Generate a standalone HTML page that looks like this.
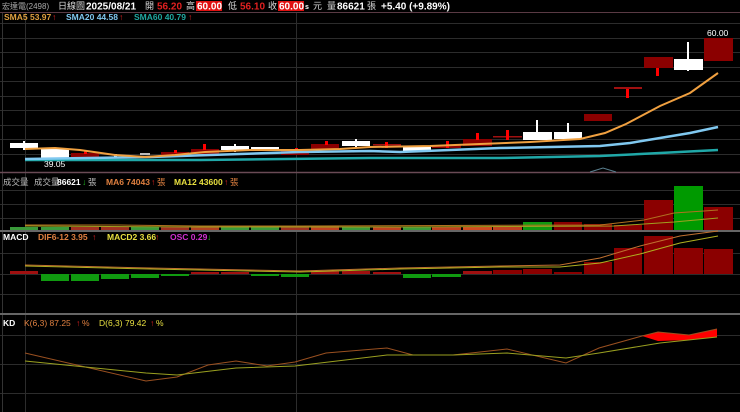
<!DOCTYPE html>
<html><head><meta charset="utf-8"><style>
html,body{margin:0;padding:0;background:#000;width:740px;height:412px;overflow:hidden}
svg{display:block}
text{font-family:"Liberation Sans","Noto Sans CJK TC",sans-serif}
</style></head><body>
<svg width="740" height="412" viewBox="0 0 740 412" xmlns="http://www.w3.org/2000/svg">
<rect width="740" height="412" fill="#000"/>
<!-- header -->
<g font-size="9">
<text x="2" y="9" fill="#aaa" font-size="8" font-family="'Liberation Serif','Noto Serif CJK SC',serif">宏達電(2498)</text>
<text x="58" y="9" fill="#ddd">日線圖</text>
<text x="86" y="9.5" fill="#fff" font-weight="bold" font-size="10">2025/08/21</text>
<text x="145" y="9" fill="#ddd">開</text>
<text x="157" y="9.5" fill="#e02020" font-weight="bold" font-size="10">56.20</text>
<text x="186" y="9" fill="#ddd">高</text>
<rect x="196" y="1" width="26" height="10" fill="#e01010"/>
<text x="197" y="9.5" fill="#fff" font-weight="bold" font-size="10">60.00</text>
<text x="228" y="9" fill="#ddd">低</text>
<text x="240" y="9.5" fill="#e02020" font-weight="bold" font-size="10">56.10</text>
<text x="268" y="9" fill="#ddd">收</text>
<rect x="278" y="1" width="26" height="10" fill="#e01010"/>
<text x="279" y="9.5" fill="#fff" font-weight="bold" font-size="10">60.00</text>
<text x="305" y="9" fill="#fff" font-size="7" font-weight="bold">s</text>
<text x="313" y="9" fill="#ddd">元</text>
<text x="327" y="9" fill="#ddd">量</text>
<text x="337" y="9.5" fill="#fff" font-weight="bold" font-size="10">86621</text>
<text x="367" y="9" fill="#ddd">張</text>
<text x="381" y="9.5" fill="#fff" font-weight="bold" font-size="10">+5.40 (+9.89%)</text>
</g>
<line x1="0" y1="12.5" x2="740" y2="12.5" stroke="#5a3a44" stroke-width="1"/>
<!-- grid lines -->
<g stroke="#2c2c2c" stroke-width="1">
<line x1="0" y1="23.5" x2="740" y2="23.5"/><line x1="0" y1="38.5" x2="740" y2="38.5"/><line x1="0" y1="52.5" x2="740" y2="52.5"/><line x1="0" y1="67.5" x2="740" y2="67.5"/><line x1="0" y1="81.5" x2="740" y2="81.5"/><line x1="0" y1="96.5" x2="740" y2="96.5"/><line x1="0" y1="110.5" x2="740" y2="110.5"/><line x1="0" y1="125.5" x2="740" y2="125.5"/><line x1="0" y1="139.5" x2="740" y2="139.5"/><line x1="0" y1="154.5" x2="740" y2="154.5"/>
<line x1="0" y1="190.5" x2="740" y2="190.5"/><line x1="0" y1="204.5" x2="740" y2="204.5"/><line x1="0" y1="218.5" x2="740" y2="218.5"/>
<line x1="0" y1="253.5" x2="740" y2="253.5"/><line x1="0" y1="274.5" x2="740" y2="274.5"/><line x1="0" y1="294.5" x2="740" y2="294.5"/>
<line x1="0" y1="335.5" x2="740" y2="335.5"/><line x1="0" y1="364.5" x2="740" y2="364.5"/><line x1="0" y1="393.5" x2="740" y2="393.5"/>
<line x1="25.5" y1="13" x2="25.5" y2="412"/><line x1="296.5" y1="13" x2="296.5" y2="412"/>
<line x1="2.5" y1="13" x2="2.5" y2="412" stroke="#333"/>
</g>
<!-- separators -->
<line x1="0" y1="172.5" x2="740" y2="172.5" stroke="#6a4a55" stroke-width="1.5"/>
<polyline points="590,172 603,168 616,172" fill="none" stroke="#5a8090" stroke-width="1"/>
<line x1="0" y1="231" x2="740" y2="231" stroke="#666" stroke-width="2"/>
<line x1="0" y1="314" x2="740" y2="314" stroke="#666" stroke-width="2"/>
<!-- price labels -->
<g font-size="8.5">
<text x="4" y="20" fill="#e0a040" font-weight="bold">SMA5 53.97</text><text x="52" y="20" fill="#e02020">↑</text>
<text x="66" y="20" fill="#80c8f0" font-weight="bold">SMA20 44.58</text><text x="119" y="20" fill="#e02020">↑</text>
<text x="134" y="20" fill="#20a8a0" font-weight="bold">SMA60 40.79</text><text x="188" y="20" fill="#e02020">↑</text>
</g>
<!-- candles -->
<g>
<line x1="24" y1="141" x2="24" y2="150" stroke="#fff" stroke-width="2"/><rect x="10" y="143" width="28" height="5" fill="#fff"/>
<rect x="41" y="149" width="28" height="10" fill="#fff"/>
<rect x="71" y="153" width="28" height="5" fill="#8b0000"/><rect x="84" y="151" width="3" height="3" fill="#f00"/>
<rect x="114" y="154" width="3" height="4" fill="#fff"/>
<rect x="140" y="153" width="10" height="2" fill="#bbb"/>
<rect x="161" y="152" width="28" height="4" fill="#8b0000"/><rect x="174" y="150" width="3" height="3" fill="#f00"/>
<rect x="191" y="149" width="28" height="5" fill="#8b0000"/><rect x="203" y="144" width="3" height="6" fill="#f00"/>
<line x1="235" y1="144" x2="235" y2="152" stroke="#fff" stroke-width="2"/><rect x="221" y="146" width="28" height="4" fill="#fff"/>
<rect x="251" y="147" width="28" height="3" fill="#fff"/>
<rect x="281" y="151" width="28" height="4" fill="#8b0000"/><rect x="295" y="148" width="3" height="4" fill="#f00"/>
<rect x="311" y="144" width="28" height="5" fill="#8b0000"/><rect x="325" y="141" width="3" height="4" fill="#f00"/>
<line x1="356" y1="139" x2="356" y2="147" stroke="#fff" stroke-width="2"/><rect x="342" y="141" width="28" height="5" fill="#fff"/>
<rect x="373" y="144" width="28" height="1.5" fill="#a01010"/><rect x="385" y="142" width="3" height="6" fill="#f00"/>
<rect x="403" y="147" width="28" height="4" fill="#fff"/>
<rect x="432" y="145" width="29" height="3" fill="#8b0000"/><rect x="446" y="141" width="3" height="7" fill="#f00"/>
<rect x="463" y="139" width="29" height="7" fill="#8b0000"/><rect x="476" y="133" width="3" height="7" fill="#f00"/>
<rect x="493" y="136" width="29" height="1.5" fill="#a01010"/><rect x="506" y="130" width="3" height="10" fill="#f00"/>
<line x1="537" y1="120" x2="537" y2="140" stroke="#fff" stroke-width="2"/><rect x="523" y="132" width="29" height="8" fill="#fff"/>
<line x1="568" y1="123" x2="568" y2="139" stroke="#fff" stroke-width="2"/><rect x="554" y="132" width="28" height="7" fill="#fff"/>
<rect x="584" y="114" width="28" height="7" fill="#8b0000"/>
<rect x="614" y="87" width="28" height="2" fill="#a01010"/><rect x="626" y="89" width="3" height="9" fill="#f00"/>
<rect x="644" y="57" width="29" height="11" fill="#8b0000"/><rect x="656" y="68" width="3" height="8" fill="#f00"/>
<line x1="688" y1="42" x2="688" y2="71" stroke="#fff" stroke-width="2"/><rect x="674" y="59" width="29" height="11" fill="#fff"/>
<rect x="704" y="38" width="29" height="23" fill="#8b0000"/>
<text x="707" y="36" fill="#fff" font-size="8.5">60.00</text>
<text x="44" y="167" fill="#fff" font-size="8.5">39.05</text>
</g>
<!-- MAs -->
<polyline fill="none" stroke="#20a8a8" stroke-width="2.5" points="25,160 200,160 370,158 500,158 600,156 660,153 718,150"/>
<polyline fill="none" stroke="#80c8f0" stroke-width="2.5" points="25,159 150,157 300,152 370,151 400,152 500,148 600,146 630,143 660,138 690,133 718,127"/>
<polyline fill="none" stroke="#f0a040" stroke-width="2" points="25,149 55,148 80,150 115,155 145,157 175,155 205,152 250,150 300,150 340,149 370,147 430,146 480,144 530,142 580,139 605,133 626,124 660,106 690,93 718,73"/>
<!-- volume -->
<g font-size="8.5">
<text x="3" y="185" fill="#bbb">成交量</text>
<text x="34" y="185" fill="#bbb">成交量</text><text x="57" y="185" fill="#fff" font-weight="bold">86621</text><text x="82" y="185" fill="#20c020">↓</text><text x="88" y="185" fill="#bbb">張</text>
<text x="106" y="185" fill="#e08040" font-weight="bold">MA6 74043</text><text x="151" y="185" fill="#e02020">↑</text><text x="157" y="185" fill="#e08040">張</text>
<text x="174" y="185" fill="#e8e040" font-weight="bold">MA12 43600</text><text x="224" y="185" fill="#e02020">↑</text><text x="230" y="185" fill="#e08040">張</text>
</g>
<g>
<rect x="10" y="227" width="28" height="3" fill="#3a9a3a"/><rect x="41" y="227" width="28" height="3" fill="#3a9a3a"/><rect x="71" y="227" width="28" height="3" fill="#a03020"/><rect x="101" y="227" width="28" height="3" fill="#a03020"/><rect x="131" y="227" width="28" height="3" fill="#3a9a3a"/><rect x="161" y="227" width="28" height="3" fill="#a03020"/><rect x="191" y="227" width="28" height="3" fill="#b04020"/><rect x="221" y="227" width="28" height="3" fill="#3a9a3a"/><rect x="251" y="227" width="28" height="3" fill="#3a9a3a"/><rect x="281" y="227" width="28" height="3" fill="#a03020"/><rect x="311" y="226" width="28" height="4" fill="#c04020"/><rect x="342" y="227" width="28" height="3" fill="#3a9a3a"/>
<rect x="373" y="227" width="28" height="3" fill="#c04020"/><rect x="403" y="227" width="28" height="3" fill="#3a9a3a"/><rect x="432" y="227" width="29" height="3" fill="#c04020"/><rect x="463" y="227" width="29" height="3" fill="#d04a20"/><rect x="493" y="226" width="29" height="4" fill="#c04020"/>
<rect x="523" y="222" width="29" height="8" fill="#109a10"/><rect x="554" y="222" width="28" height="8" fill="#8b0000"/><rect x="584" y="224" width="28" height="6" fill="#8b0000"/><rect x="614" y="225" width="28" height="5" fill="#8b0000"/>
<rect x="644" y="200" width="29" height="30" fill="#8b0000"/><rect x="674" y="186" width="29" height="44" fill="#009a00"/><rect x="704" y="207" width="29" height="23" fill="#8b0000"/>
<polyline fill="none" stroke="#b07020" stroke-width="1" points="25,225 120,225 200,226 300,226 600,225 644,220 674,213 704,211 718,210"/>
<polyline fill="none" stroke="#a0a020" stroke-width="1" points="25,226 200,227 400,227 614,226 674,222 718,218"/>
</g>
<!-- MACD -->
<g font-size="8.5">
<text x="3" y="240" fill="#fff" font-weight="bold">MACD</text>
<text x="38" y="240" fill="#e08040" font-weight="bold">DIF6-12 3.95</text><text x="92" y="240" fill="#e02020">↑</text>
<text x="107" y="240" fill="#e8e040" font-weight="bold">MACD2 3.66</text><text x="155" y="240" fill="#e02020">↑</text>
<text x="170" y="240" fill="#d030d0" font-weight="bold">OSC 0.29</text><text x="207" y="240" fill="#20c020">↓</text>
</g>
<g>
<rect x="10" y="271" width="28" height="3" fill="#a01010"/>
<rect x="41" y="274" width="28" height="7" fill="#109a10"/><rect x="71" y="274" width="28" height="7" fill="#109a10"/><rect x="101" y="274" width="28" height="5" fill="#109a10"/><rect x="131" y="274" width="28" height="4" fill="#109a10"/><rect x="161" y="274" width="28" height="2" fill="#109a10"/>
<rect x="191" y="272" width="28" height="2" fill="#a01010"/><rect x="221" y="272" width="28" height="2" fill="#a01010"/><rect x="251" y="274" width="28" height="2" fill="#109a10"/><rect x="281" y="274" width="28" height="3" fill="#109a10"/><rect x="311" y="271" width="28" height="3" fill="#a01010"/><rect x="342" y="271" width="28" height="3" fill="#a01010"/>
<rect x="373" y="272" width="28" height="2" fill="#a01010"/><rect x="403" y="274" width="28" height="4" fill="#109a10"/><rect x="432" y="274" width="29" height="3" fill="#109a10"/><rect x="463" y="271" width="29" height="3" fill="#a01010"/><rect x="493" y="270" width="29" height="4" fill="#8b0000"/><rect x="523" y="269" width="29" height="5" fill="#8b0000"/><rect x="554" y="272" width="28" height="2" fill="#8b0000"/>
<rect x="584" y="262" width="28" height="12" fill="#8b0000"/><rect x="614" y="248" width="28" height="26" fill="#8b0000"/><rect x="644" y="236" width="29" height="38" fill="#8b0000"/><rect x="674" y="248" width="29" height="26" fill="#8b0000"/><rect x="704" y="249" width="29" height="25" fill="#8b0000"/>
<polyline fill="none" stroke="#c07030" stroke-width="1" points="25,265 150,268 300,271 400,268 500,266 560,265 600,258 640,246 680,236 718,231"/>
<polyline fill="none" stroke="#b0b020" stroke-width="1" points="25,266 150,269 300,272 400,269 500,267 560,267 600,263 640,254 680,243 718,236"/>
</g>
<!-- KD -->
<g font-size="8.5">
<text x="3" y="326" fill="#fff" font-weight="bold">KD</text>
<text x="24" y="326" fill="#e08040">K(6,3) 87.25</text><text x="76" y="326" fill="#e02020">↑</text><text x="82" y="326" fill="#e08040">%</text>
<text x="99" y="326" fill="#e8e040">D(6,3) 79.42</text><text x="150" y="326" fill="#e02020">↑</text><text x="156" y="326" fill="#e8e040">%</text>
</g>
<polygon fill="#f00" points="642,336 658,332 689,335 717,329 717,337 689,340 658,341"/>
<polyline fill="none" stroke="#9a5020" stroke-width="1" points="25,353 146,381 177,377 208,365 236,361 267,366 295,362 326,353 387,348 413,355 453,355 507,349 566,363 599,348 642,336 658,332 689,335 717,329"/>
<polyline fill="none" stroke="#9aa020" stroke-width="1" points="25,361 146,373 177,375 236,368 295,366 387,355 453,355 507,353 566,358 599,353 660,343 717,337"/>
</svg>
</body></html>
